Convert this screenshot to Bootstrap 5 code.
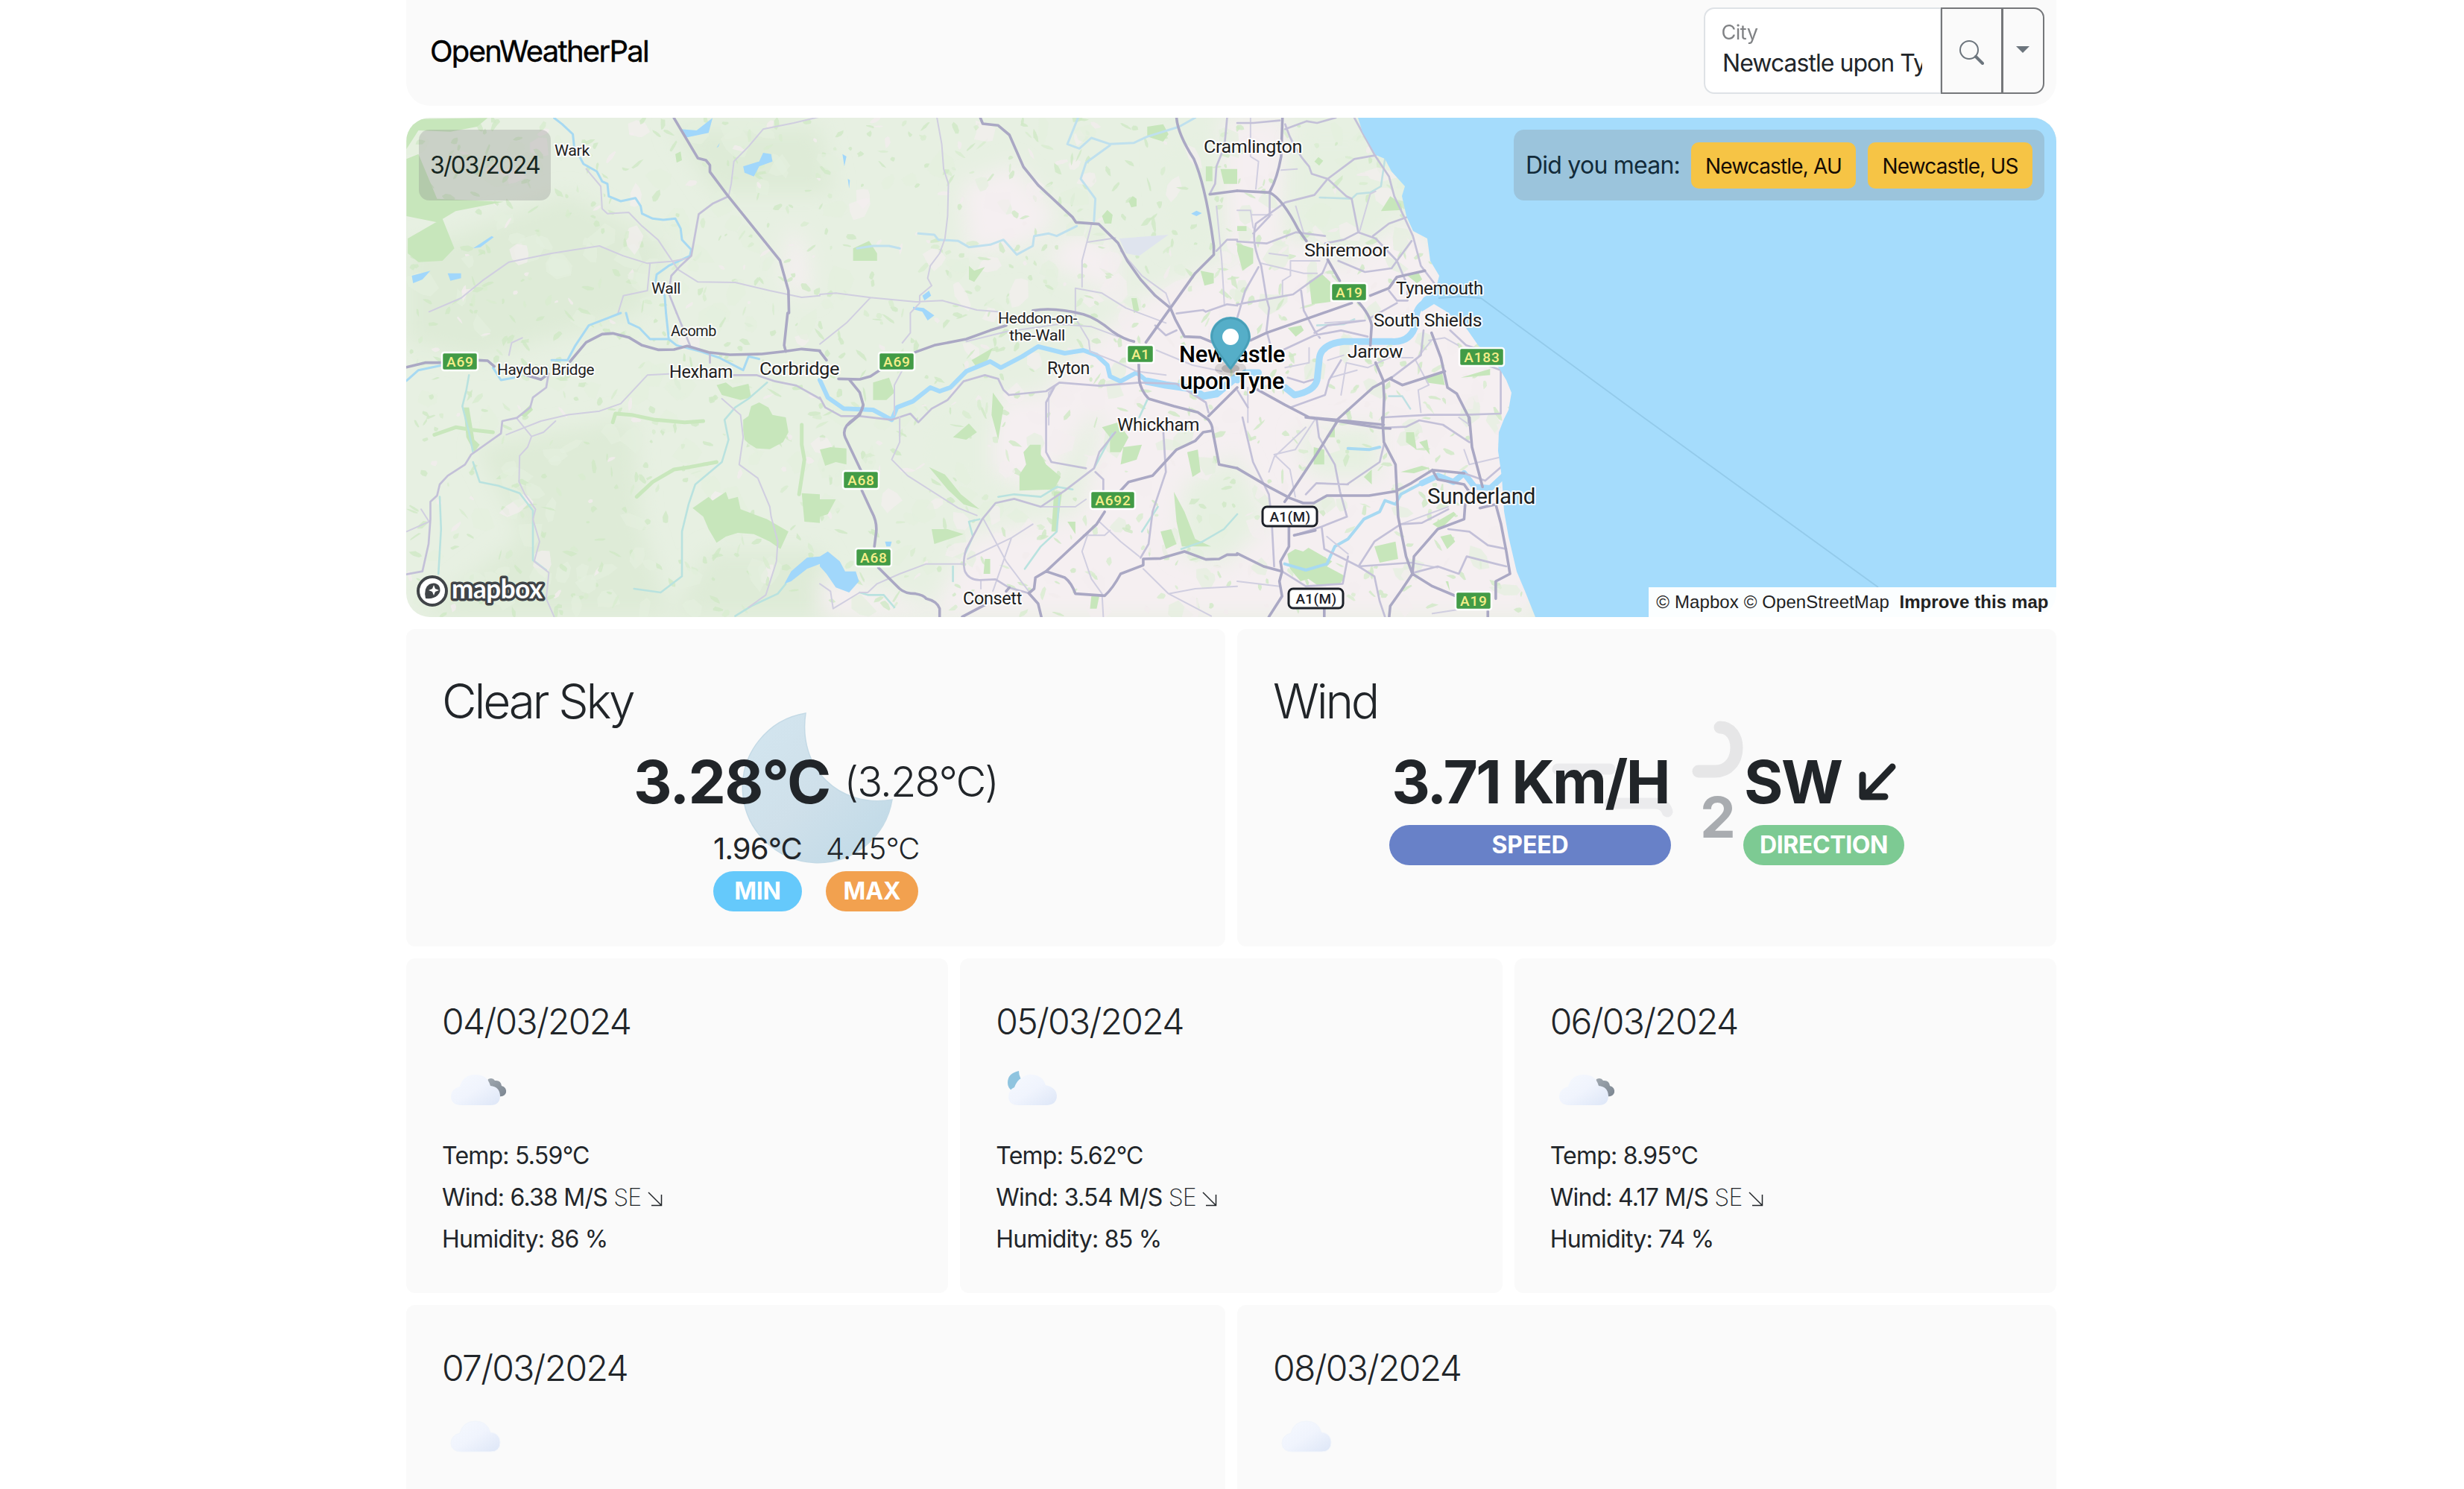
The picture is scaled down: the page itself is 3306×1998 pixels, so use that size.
<!DOCTYPE html>
<html lang="en">
<head>
<meta charset="utf-8">
<title>OpenWeatherPal</title>
<link href="https://cdn.jsdelivr.net/npm/bootstrap@5.3.0/dist/css/bootstrap.min.css" rel="stylesheet">
<style>
html{font-size:32px}
body{font-family:Inter,"Liberation Sans",sans-serif;background:#fff;color:#212529;height:1998px;letter-spacing:-.012em}
.page{width:2214px;margin:0 auto;height:1998px;overflow:hidden;transform:translateX(-1px)}
.panel{background:#fafafa;border-radius:12px}
.topbar{height:142px;padding:10px 16px 0 32px;border-radius:0 0 32px 32px;background:#fafafa}
.brand{font-size:40px;color:#000;line-height:1;padding-top:39px;letter-spacing:-.043em;-webkit-text-stroke:.4px #000}
.searchbox{width:457px;height:116px}
.searchbox .form-floating{width:319px;flex:none}
.searchbox .form-control{border:2px solid #dee2e6;border-radius:14px 0 0 14px;letter-spacing:-.03em;color:#212529;height:116px;padding-left:23px}
.searchbox .form-floating>label{border:0;color:#3d4044;left:-1px;letter-spacing:-.02em}
.searchbox .btn{border:2px solid #75777a;color:#6c757d;background:#fafafa;padding:0;display:flex;align-items:center;justify-content:center}
.btn-find{width:84px}
.btn-find svg{margin-top:3px}
.btn-more{width:58px;border-radius:0 14px 14px 0!important}
.caret{border:9px solid transparent;border-top:9px solid #6c757d;border-bottom:0;margin-bottom:3px}
.mapbox-wrap{height:670px;margin:16px 0}
.mapbox-wrap svg.mapart{display:block;border-radius:32px;width:2214px;height:670px}
.chip{background:rgba(128,128,128,.28);border-radius:14px;top:16px;height:95px;color:#16261f}
.chip-date{left:17px;width:177px;letter-spacing:-.052em}
.chip-alt{right:16px;width:712px;padding:0 16px;color:#122b3a;background:rgba(128,128,128,.26);letter-spacing:-.024em}
.btn-alt{background:#f6c445;color:#160c04;font-size:28px;line-height:62px;height:62px;width:221px;border-radius:10px;padding:0;letter-spacing:-.03em}
.btn-alt:hover{background:#f6c445}
.attrib{right:0;bottom:0;height:40px;width:547px;background:rgba(255,255,255,.95);font:24px/40px "Liberation Sans",Arial,sans-serif;letter-spacing:.004em;color:#222}
.gap-cards{gap:16px}
.now{height:426px;padding:58px 48px 0}
.now h2{font-size:64px;font-weight:350;line-height:77px;margin:0;letter-spacing:-.05em}
.big{font-size:80px;font-weight:700;line-height:96px;letter-spacing:-.02em}
.feels{font-size:56px;font-weight:350;line-height:96px;letter-spacing:-.033em}
.mm{font-size:40px;line-height:60px;letter-spacing:-.022em}
.pill{height:54px;line-height:54px;border-radius:27px;color:#fff;font-weight:700;font-size:32px;text-align:center;letter-spacing:-.005em}
.deco{left:0;top:0;pointer-events:none}
.day{height:449px;padding:54px 48px 0}
.day h4{font-size:48px;font-weight:350;line-height:62px;margin:0;letter-spacing:-.035em}
.day .wx{display:block;width:100px;height:100px;margin:10px 0 15px}
.day p{font-size:32px;line-height:48px;margin:0 0 8px;letter-spacing:-.024em}
.thin{font-weight:200}
.lbl text{font-family:Roboto,sans-serif;fill:#1e1e1e;stroke:#fff;stroke-width:4;stroke-opacity:.85;paint-order:stroke;stroke-linejoin:round}
.sh rect{fill:#429b46;stroke:#fff;stroke-width:2.5}
.sh text{font:500 19px Roboto,sans-serif;fill:#f4ee8a;letter-spacing:.8px;text-anchor:middle}
.mw rect{fill:#fff;stroke:#1c2028;stroke-width:3}
.mw text{font:500 19px Roboto,sans-serif;fill:#1c2028;letter-spacing:.4px;text-anchor:middle}
.z path{fill:none;vector-effect:non-scaling-stroke;stroke-linejoin:round;stroke-linecap:round}
.z .a{stroke:#aaa8c4;stroke-width:3.6}
.z .b{stroke:#c3c0d8;stroke-width:2.7}
.z .c{stroke:#d0cee0;stroke-width:2}
.z .r{stroke:#a7d9f2;stroke-width:3}
.z .t{stroke:#b9e2df;stroke-width:2.6}
.z .w{fill:#a1d7fb}
.z .g{fill:#c7e6bb}
</style>
</head>
<body>
<svg width="0" height="0" class="position-absolute">
<defs>
<linearGradient id="cl" x1="0" y1="0" x2="1" y2="1"><stop offset="0" stop-color="#f6f9fe"/><stop offset=".5" stop-color="#f0f4fd"/><stop offset="1" stop-color="#dde6f7"/></linearGradient>
<linearGradient id="dk" x1="0" y1="0" x2="1" y2="1"><stop offset="0" stop-color="#a3abb3"/><stop offset="1" stop-color="#7b8590"/></linearGradient>
<linearGradient id="mn" x1="0" y1="0" x2="1" y2="1"><stop offset="0" stop-color="#d3e6f0"/><stop offset=".5" stop-color="#cfe0ea"/><stop offset="1" stop-color="#bed9e7"/></linearGradient>
<symbol id="cloud" viewBox="0 0 100 100"><path d="M26 71q-13 0-14-11q0-11 12-14q4-16 21-16q16 0 20 15q12 1 13 13q0 13-13 13z" fill="url(#cl)" stroke="#f1f5fb"/></symbol>
<symbol id="overcast" viewBox="0 0 100 100"><path d="M62 36q6-3 9 2q8-1 9 7q7 2 6 9q-2 6-9 5l-19-10z" fill="url(#dk)"/><path d="M26 71q-13 0-14-11q0-11 12-14q4-16 21-16q16 0 20 15q12 1 13 13q0 13-13 13z" fill="url(#cl)"/></symbol>
<symbol id="moony" viewBox="0 0 100 100"><path d="M31 25q-15 3-15 16q0 6 5 10l12-5q3-6 0-12q-2-4-2-9z" fill="#8fc4df"/><path d="M31 71q-13 0-14-10q0-11 8-14q4-10 9-12q7-6 15-5q14 1 18 14q14 3 15 14q0 12-13 13z" fill="url(#cl)"/></symbol>
<symbol id="arr" viewBox="0 0 20 20"><path d="M1 1L18.5 18.5M5 18.5H18.5V4" fill="none" stroke="#212529" stroke-width="1.5"/></symbol>
</defs></svg>

<div class="page">
  <nav class="topbar d-flex justify-content-between align-items-start">
    <span class="brand">OpenWeatherPal</span>
    <div class="input-group searchbox flex-nowrap">
      <div class="form-floating">
        <input class="form-control" id="city" placeholder="City" value="Newcastle upon Tyne">
        <label for="city">City</label>
      </div>
      <button class="btn btn-find" type="button" aria-label="Search"><svg width="34" height="34" viewBox="0 0 34 34" fill="none" stroke="#6c757d"><circle cx="14" cy="14" r="12" stroke-width="2"/><path d="M23 23l9 9" stroke-width="4" stroke-linecap="round"/></svg></button>
      <button class="btn btn-more" type="button" aria-label="More"><span class="caret"></span></button>
    </div>
  </nav>

  <div class="mapbox-wrap position-relative">
    <svg class="mapart" viewBox="545 158 2214 670" preserveAspectRatio="none">
      <defs><filter id="soft" x="-20%" y="-20%" width="140%" height="140%"><feGaussianBlur stdDeviation="14"/></filter></defs>
      <rect x="545" y="158" width="2214" height="670" fill="#e7f0e2"/>
      <g filter="url(#soft)" fill="#deebd7">
        <path d="M600 320L760 260 900 330 860 420 640 480 545 460V330z"/><path d="M640 600L850 560 860 700 900 828H560L700 720z"/><path d="M950 740L1100 740 1140 828H900z"/><path d="M900 170L1100 170 1120 260 960 260z"/>
      </g>
      <g filter="url(#soft)" fill="#f5eff1">
        <path d="M1290 250L1360 220 1420 290 1380 330 1300 340z"/><path d="M1530 400L1700 330 1900 300 2060 520 2060 828 1560 828 1250 828 1300 720 1450 690 1480 560 1400 520z"/><path d="M1640 158L1730 158 1720 330 1640 330z"/><path d="M1350 530L1480 530 1400 660 1290 620z"/><path d="M1440 310L1500 330 1500 400 1400 350z"/><path d="M1060 300L1080 330 1090 400 1050 380z"/><path d="M1100 770L1200 800 1290 828H1100z"/>
      </g>
      <g filter="url(#soft)" fill="#e6f0e1">
        <path d="M1590 650L1660 610 1700 700 1640 760 1580 740z"/><path d="M1740 190L1840 190 1870 300 1800 360 1740 300z"/><path d="M1250 560L1330 540 1330 660 1240 640z"/><path d="M1740 580L1850 570 1850 640 1760 640z"/><path d="M1560 200L1620 180 1640 330 1570 330z"/>
      </g>
      <g id="patches"></g>

      <g class="z" transform="translate(540 0) scale(.357143 .333333)">
        <path class="g" d="M15 480L320 475 280 510 180 530 60 525 15 600zM15 640L60 620 130 800 380 812 200 850 130 895 15 870zM20 960L150 880 195 1000 150 1050 60 1055 20 1020zM1025 620l20-10 5 35-20 10z"/>
        <path class="w" d="M1045 520l60 5 60-50-15 60-90 20zM1280 670l60-20 15-35 30 5 5 30-50 20-20 40-35-15zM35 1110l70-20-30 35-35 15zM170 1100l50 0 0 20-40 10zM265 1000l70-50 8 5-50 40zM1180 595l12-20-5 15z"/>
        <path class="r" d="M570 475L600 500 640 540 645 590 680 660 730 690 750 730 770 740 775 790 820 810 875 797 895 830 900 860 940 880 980 885 1025 880 1045 920 1050 965 1085 1005 1080 1030 1000 1070 955 1105 950 1140 985 1190 990 1260"/>
        <path class="c" d="M690 680L745 750 750 840 770 860 850 855 900 910 960 965 1010 1045 1035 1085 1110 1135 1250 1137 1380 1170 1500 1197 1568 1190M100 1255L220 1200 300 1130 400 1055 560 1020 740 990 830 1030 920 1060 1010 1052 1070 1040M1568 470L1470 495 1355 520 1300 590 1245 650 1235 740 1225 790M930 1060l-10 110-90 20-20 70"/>
        <path class="b" d="M1220 793L1165 820 1113 862 1090 1000 1085 1030 1040 1075 1010 1110 1000 1180 1030 1260"/>
        <path class="a" d="M1020 475L1110 637 1140 645 1155 665 1155 692 1220 785 1418 1048 1450 1170 1452 1260"/>
      </g>
      <g class="z" transform="translate(540 420) scale(.357143 .333333)">
        <path class="g" d="M1090 785L1110 770 1150 740 1165 755 1215 720 1225 750 1260 740 1270 790 1370 830 1450 880 1420 950 1380 920 1320 890 1260 885 1215 900 1180 925 1150 870 1130 820zM1280 430L1300 415 1310 375 1340 360 1375 380 1390 410 1440 420 1450 480 1430 520 1380 548 1330 545 1300 525 1285 510 1280 470zM1180 290L1215 280 1240 300 1300 285 1310 340 1270 350 1200 330zM1500 725L1568 730V845L1510 840zM230 380l20 0 20 130 20 20-20 30-30-60zM440 410l40-40 10 20-30 30z"/>
        <path class="t" style="stroke:#c9e7bd;stroke-width:5" d="M790 440L800 405 860 410 950 430 1060 440 1130 435M880 740l60-60 80-50 60-10 100-20M120 490l80-30 60 10 80 10M1500 450v80l10 60-20 140"/>
        <path class="r" d="M15 273L60 230 150 210M340 220L370 270 420 260M560 190L620 190 650 130 700 50 760 25 820 0M840 0L850 40 890 60 930 105 1000 105 1030 130 1120 155 1190 180 1280 230 1300 175 1340 185M990 0l10 100"/>
        <path class="t" d="M250 250L240 310 225 375 250 480 265 560M1370 280L1300 345 1250 380 1210 430 1225 510 1200 600 1100 690 1075 770 1050 880 1050 1060 970 1125 870 1110M140 740L145 870 135 1050M265 600l25 80 70 15 80 30 50 70 0 90 0 110 50 40M1250 1220l60-40 100-50 30-40"/>
        <path class="w" d="M1435 1090L1460 1040 1520 985 1568 980V1010L1520 1030 1460 1080z"/>
        <path class="c" d="M430 425L485 497 470 540 440 575 438 680 460 730 500 790 490 830 515 920 495 1000 550 1045 540 1150 570 1223M390 490L520 435 620 410 740 395 820 365 920 250 1000 245M485 497L530 480 575 435M1200 345L1270 410 1280 500 1265 610 1335 665 1380 780 1385 820 1410 920 1405 1000 1365 1135 1300 1185M70 790l30 50-85 40M400 170l10-50 40-20"/>
        <path class="b" d="M1240 250L1330 250 1400 275 1480 292 1568 345M548 250L540 300 490 340 480 380 430 422 375 435 370 485 258 570 235 610 170 655 140 690 130 735 105 760 105 830 98 930 75 1040 15 1052M1030 0L1080 130M1155 160l0 40"/>
        <path class="a" d="M15 218L85 200 150 200M283 190L320 192 345 215M460 248L520 268 548 245M630 195L690 118 750 85 790 82 850 98 900 130 960 148 1020 147 1070 133 1150 158 1230 168 1350 165 1430 155 1500 145 1568 152M1447 0L1434 130 1440 155"/>
      </g>
      <g class="z" transform="translate(1100 150) scale(.357143 .333333)">
        <path class="g" d="M125 550l60-30 30 50 0 30-90 0zM1060 420l20-25 20 20-5 35-25 0zM1230 60l60-10 20 40-20 30-60-20zM1160 360l15-20 15 10 0 30-20 5zM200 1090l60-20 20 60-30 30-50 0zM1450 220h25v60h-25zM1505 230h63v60l-50 0zM1430 640l50 10 0 40-35 10zM560 620l20 20 40-15-40 60-20-10zM570 1000l80-50-20 50-40 30zM1170 750l20 0 10 50-20 10z"/>
        <path style="fill:#dfe4ee" d="M1125 510L1310 495 1200 580 1150 570z"/>
        <path class="w" d="M385 740l25-20 8 20-25 20zM350 785l40 5 40 30-25 20-20-35-35-10zM85 170l15 10-8 40zM105 270l8 5-3 35zM1395 410l20-12 20 10-20 12z"/>
        <path class="r" style="stroke:#bfe0ee" d="M370 490L430 495 445 515 520 520 560 545 640 535 690 515 740 575 800 540 805 500 860 490 890 500 965 460M970 24L930 130 975 148 1020 105 1090 130 1180 125 1230 100 1350 60 1410 24M1090 135L1000 205 980 270 1035 350 1030 440M140 550l60-10 60 0 40 10"/>
        <path class="r" style="stroke-width:6;stroke:#a5dafa" d="M0 1080L30 1150 90 1195 200 1200 270 1240 290 1190 350 1165 415 1110 450 1125 490 1110 550 1045 640 1005 680 1030 760 985 820 945 920 972 990 960 1040 980 1080 1020 1090 1065 1130 1085 1190 1050 1230 1085"/>
        <path class="r" style="stroke-width:10;stroke:#a5dafa" d="M1230 1085L1300 1100 1400 1115 1440 1145 1490 1135 1568 1065"/>
        <path class="c" d="M440 24L458 130 465 230 483 290 480 420 470 510 450 570 415 620 405 670 420 700 375 740 375 770 340 810 340 890 310 930M0 735L60 730 190 748 360 765 460 760 590 798 670 805M190 748L100 850 0 935M1020 455L985 600 985 705M1005 525L1110 508M960 820L960 710 1060 730 1150 790 1300 850M960 830L1010 920 1015 965 1110 1005 1190 1045 1300 1060M1265 960L1400 1020 1510 1045M1130 560L1210 660 1300 730 1320 790M1490 380L1510 600 1520 780M280 1220l0-120 30-60M860 1260V1130l40-40M550 925l150-40 200-30 120 10 100 40"/>
        <path class="b" d="M1530 24L1520 140 1490 220 1485 290 1465 330M710 1140L690 1120 670 1075 620 1060 540 1085 480 1160 420 1195 370 1250 340 1215 270 1240 150 1225 80 1225 20 1190 0 1150M710 1140L850 1125 900 1090 1050 1103 1200 1090 1340 1095 1450 1170 1460 1210M1340 812L1440 798 1450 805 1530 775 1568 780M1490 560l40-45 38 0M1260 860l40 40 40-20"/>
        <path class="a" d="M603 24L612 48 670 55 712 93 765 222 820 295 950 425 962 445 1048 452 1120 528 1155 600 1205 675 1260 740 1317 790M1340 24Q1345 90 1405 190 1450 300 1480 540L1480 575 1410 650 1317 790 1225 928M1317 790L1335 835 1370 905 1430 908 1480 930M800 800Q880 785 990 815 1040 830 1100 885 1140 915 1180 925M358 968L430 940 550 915 640 880 700 860M225 1040L190 1065 150 1077 70 1075M110 1077L150 1130 163 1180 150 1220 105 1260M1198 1010L1200 1080Q1205 1120 1235 1155L1330 1185 1420 1210 1460 1240M1568 1110L1460 1225M0 965L25 1000M1465 332L1568 318"/>
      </g>
      <g class="z" transform="translate(1100 500) scale(.357143 .333333)">
        <path class="g" d="M750 410L775 370 765 320 790 290 830 290 830 330 850 370 905 420 880 470 750 475zM0 310L40 300 100 305V370L60 360 20 375zM500 260L560 205 590 240 550 270zM1140 300L1210 290 1190 350 1130 370zM420 630l60 0 60 20-110 40zM1280 640l40-10 20 60-40 20zM1380 320l40-10 10 90-30 20zM1060 220l60-20 40 60-30 60-40 0 0-60zM880 480l30 0-20 160-20 0zM410 380l60 30 60 80 70 60-60-20-60-60zM1330 480l40 80 40 110 60 30-110 0-20-100zM1020 900h30l-10 50-25 0zM0 510l60 0-30 60-30 10zM620 750l20 0 0 60-25 0zM650 80l40 60-20 130-25-100zM930 600l30 0 0 50z"/>
        <path class="w" d="M0 740L30 720 75 760 95 800 135 800 147 840 110 885 60 865 25 810 0 780zM245 680h25l-5 20h-15z"/>
        <path class="t" d="M600 590L560 600 575 660 545 730M1030 385l70-140M1270 540l-60 100M1568 570l-50 60-80 50-80 30M670 500l60-10 100 10 60-40 60 10M500 780l0 60M150 885l30 10 60 0 40 50M900 500l-10 140-60 60-60 90M1200 180l30-70"/>
        <path class="c" d="M300 180L300 280 270 350 330 415 520 545 590 575M615 590L700 760 790 888M555 750L720 665 800 610M650 880L720 665M215 850L300 810 400 770 540 770M1050 600L1130 680 1200 740M1010 640L985 720 1020 830 1060 890 1065 983M1215 790L1310 890 1470 980M830 540L960 540 1000 510M215 850L180 885 150 885 50 950 40 880 0 850M605 835V870M1310 890l100-20 158-10M990 655l80 0 20-20"/>
        <path class="b" d="M610 590L550 710Q535 760 545 800 560 835 600 835L660 832 710 865 785 888M610 590L660 525 730 508 830 540 920 475 1030 385 1050 320 1110 240M1290 230L1300 400 1250 560 1235 690 1205 745M880 60L850 120 850 320 870 360 1000 385M1035 400l30 30 0 50"/>
        <path class="a" d="M163 130Q160 160 130 185 80 220 95 260L155 395M158 475L195 560Q215 600 212 640L205 700M220 785Q290 860 300 870 320 890 360 890 390 895 400 910 440 920 450 950V983M1070 560L1040 610 930 720 850 800 810 825 805 870 785 888 820 930 832 983M850 800L920 825Q945 845 960 890L1070 898Q1100 870 1130 810L1215 775 1215 750 1280 748 1370 720 1450 752 1500 750 1530 733 1568 733M1130 475L1160 440 1250 415 1340 310 1410 275 1440 240 1470 235M1460 190Q1475 210 1475 230L1500 370 1568 385M535 983L620 935M700 880L712 865"/>
      </g>
      <g class="z" transform="translate(1660 150) scale(.357143 .333333)">
        <path class="g" d="M540 400L575 340 615 370 620 395zM270 680l50-25 30 30 0 80-70 10zM0 530l60 20 0 60-40 30-20-80zM640 660l40-15 15 30-20 15zM190 870l50-10 10 20-30 25zM290 200l15-18 18 15-15 20zM710 1070l60-20 10 50-70-10zM0 460h35v20H0zM840 1070l110-35 0 25z"/>
        <path class="t" style="stroke:#bfe0e3" d="M555 190L540 300 500 325 450 330 430 350 310 345M570 1145l50 0 30 50M300 860l100-5 40-20"/>
        <path class="c" d="M50 24V180L80 200 70 310M220 380l30 110M460 480l40-150 20-10M165 235l60-5M0 397h50l10 70M55 415h75M90 610L250 650 300 650M170 740v-60l30-20v-60l110 0M120 570l70 10M330 850l140-10M390 1140l20-130 80 20 80-40 90 0M690 1210l-10-90 40-20-50-100 60-80M720 920l60-10 50 30M340 1000l60-20M180 1030l90-20 0-60M40 1110v140M450 1040l-100 30"/>
        <path class="b" d="M180 50Q210 150 270 220L280 250 340 270 410 340 430 350 455 485M0 45L60 45 160 35M180 70L260 38 300 45 370 24M520 175L440 190 340 270 290 335 180 365 70 450Q50 520 90 620L110 750 120 790 110 880 130 960M440 24L520 180 570 260 590 340 630 430 660 500 690 620 740 690M455 485L400 515 330 530M455 485L520 510 600 600 580 630 480 645 380 600M600 600L655 520M510 500L570 450 635 425M0 522L110 530 220 485 330 500M0 775L110 755 210 735 320 650 340 600M240 720L250 800 290 880 310 910M150 970L290 900 390 880 490 905M700 880L690 980 580 1070M600 600L640 700 640 760 600 760 570 720M80 625L30 720 0 830M390 1000L345 1080 330 1140 200 1190M550 1230l170-10 130 0 140-5V1040L940 1020M122 325V420L60 490M800 880l60 60 60 20M480 840l-140 20-50 30M500 830l100-60M190 1070l60 20 60-20M0 1120l40 70"/>
        <path class="r" style="stroke-width:9;stroke:#a5dafa" d="M710 765Q665 790 672 850 655 930 580 925L400 925Q310 935 308 1000L300 1080Q290 1125 215 1140L180 1110M80 1050L30 1050 0 1080"/>
        <path class="a" d="M170 24L165 180Q150 270 122 322M0 318L122 325Q170 350 230 475L260 520M340 595L385 680M455 765Q500 820 505 860L500 940M520 1010L548 1080 552 1150 548 1260M50 920L110 890 430 770M500 740L570 710 600 665 705 640M370 1245L510 1110 580 1070M575 1075L620 1100 780 1045M730 890L765 990 790 1110 825 1135 870 1230 872 1260M70 1115L180 1180 270 1230 370 1240 550 1260"/>
      </g>
      <g class="z" transform="translate(1660 560) scale(.70791 .333333)">
        <path class="g" d="M95 550l15-20 15 10 10-15 45 55-10 20 35 40-10 30-40 10-20-30-15 10-20-50zM260 520l40-20 5 70-35 15zM145 120l20 10 0 60-20 0zM385 480l20-10 8 30-15 30zM370 430l40-50 5 10-30 60zM310 220l40-25 15 10-30 20zM320 60l15 0 5 70-20-30zM345 100l15-10 5 60zM395 660l5 0 3 40zM185 20l0 60-15 0zM240 240l15-30 0 60z"/>
        <path class="r" style="stroke-width:4" d="M350 265L310 310 300 350 280 335 270 380 240 410 210 490 185 520 170 590 130 615 90 590M210 125L250 130 270 120"/>
        <path class="r" style="stroke-width:8;stroke:#a5dafa" d="M505 235L480 285 450 280 430 225 410 260 380 235 350 265"/>
        <path class="c" d="M130 40l-60 120-10 60M150 0l-40 130-40 20 30 60 10 110M310 430l90-70M440 30l-20-30M500 160l-60 30-10-60M330 585l50 20M210 550l-40-70M370 790l60-20M0 660L80 680"/>
        <path class="b" d="M275 42L320 38 345 12 390 30 440 100M10 0L30 180 60 310 65 400 70 600M150 0L155 80 185 190 195 300 208 400 160 440 108 475M160 440L165 530 230 600 260 640 270 740 280 803M85 620L130 680 200 670 210 560M230 600L260 500 310 430 350 425 400 370M230 600L330 585M208 270L270 180 278 110M130 310L150 265 210 270M335 625L380 600 420 630 435 560 490 590 510 600M400 450L440 460 475 515 510 530M430 225L470 255 500 200"/>
        <path class="a" d="M130 0L190 15 270 42 290 45M190 15L150 150 100 310 90 340M0 205L60 280 100 325 125 345 145 345 170 315 250 315 300 298 330 265 370 212 430 225M275 0L278 100 300 190 305 400 320 560 332 630 370 680 415 720M440 0L445 120 465 280M332 630L310 700 290 760 288 803M332 630L335 560 380 450 430 410 432 350M370 212L380 250 430 270 440 300M0 548L50 600 85 620M98 440V520L82 580 85 620 80 660 85 720 60 803M108 475l40-20M460 365L490 350 500 430 510 540 517 630 490 660 490 730M165 770V803M475 780V803"/>
      </g>
      <path d="M1822 158L1828 177 1846 208 1858 213 1867 230 1885 250 1881 263 1887 290 1896 310 1915 320 1919 350 1931 370 1926 390 1910 399 1903 410 1908 418 1924 408 1939 417 1967 440 1983 463 2012 495 2021 510 2028 527 2024 550 2018 562 2011 580 2010 605 2015 640 2018 686 2024 720 2035 767 2046 793 2060 828H2759V158z" fill="#a5dcfc"/>
      <path d="M1930 400L1960 398 1987 400 2205 560 2520 788" fill="none" stroke="#93caea" stroke-width="1.8"/>

      <g transform="translate(1624 425) scale(2)">
        <ellipse cx="13.5" cy="34.8" rx="10.5" ry="5.25" fill="#000" opacity=".12"/><ellipse cx="13.5" cy="34.8" rx="6" ry="3" fill="#000" opacity=".16"/>
      </g>
      <g class="lbl" id="labels"></g>
      <g class="sh" id="shields"></g>
      <g class="mw" id="motorways"></g>
      <g transform="translate(1624 425) scale(2)">
        <path d="M27 13.5C27 19.07 20.25 27 14.75 34.5 14.02 35.5 12.98 35.5 12.25 34.5 6.75 27 0 19.22 0 13.5 0 6.04 6.04 0 13.5 0 20.96 0 27 6.04 27 13.5z" fill="#55aec8"/>
        <path d="M26 13.5C26 18.8 19.5 26.2 13.5 34.8 7.5 26.2 1 18.8 1 13.5 1 6.6 6.6 1 13.5 1S26 6.6 26 13.5z" fill="none" stroke="#3b8da6" stroke-width="1.2" opacity=".5"/>
        <circle cx="13.5" cy="13.5" r="5.5" fill="#fff"/>
      </g>
      <circle cx="580" cy="793" r="19" fill="#fff" stroke="#404448" stroke-width="4"/>
      <path d="M571 803q-3-14 5-19q8-4 13 2q4 7-2 13q-5 5-16 4z" fill="#404448"/><path d="M582 785l2 5 5 2-5 2-2 5-2-5-5-2 5-2z" fill="#fff"/>
      <text x="606" y="803" textLength="122" lengthAdjust="spacingAndGlyphs" font-family="Lato,sans-serif" font-weight="700" font-size="36" fill="#fff" stroke="#404448" stroke-width="7" paint-order="stroke" stroke-linejoin="round">mapbox</text>
    </svg>
    <div class="chip chip-date position-absolute d-flex align-items-center justify-content-center">3/03/2024</div>
    <div class="chip chip-alt position-absolute d-flex align-items-center justify-content-between">
      <span>Did you mean:</span>
      <div class="d-flex gap-cards"><button class="btn btn-alt">Newcastle, AU</button><button class="btn btn-alt">Newcastle, US</button></div>
    </div>
    <div class="attrib position-absolute text-center text-nowrap">© Mapbox © OpenStreetMap&nbsp; <b>Improve this map</b></div>
  </div>

  <div class="d-flex gap-cards">
    <section class="panel now flex-fill w-50 position-relative">
      <svg class="deco position-absolute" width="1099" height="426" viewBox="545 844 1099 426"><path d="M1081 957C1070 1030 1125 1085 1197 1073A101 101 0 1 1 1081 957z" fill="url(#mn)" stroke="#c4dae6" stroke-width="1.5"/></svg>
      <div class="position-relative">
        <h2>Clear Sky</h2>
        <div class="d-flex justify-content-center align-items-center" style="margin-top:22px;gap:19px">
          <span class="big">3.28°C</span><span class="feels">(3.28°C)</span>
        </div>
        <div class="d-flex justify-content-center" style="gap:32px;margin-top:12px">
          <div style="width:119px" class="text-center"><div class="mm">1.96°C</div><div class="pill" style="background:#65c9fb">MIN</div></div>
          <div style="width:124px" class="text-center"><div class="mm" style="font-weight:350">4.45°C</div><div class="pill" style="background:#f2a14f">MAX</div></div>
        </div>
      </div>
    </section>
    <section class="panel now flex-fill w-50 position-relative">
      <svg class="deco position-absolute" width="1099" height="426" viewBox="1660 844 1099 426" fill="none" stroke-linecap="round">
        <path d="M2308 976C2322 976 2330 989 2330 1003C2330 1021 2319 1035 2301 1035H2279" stroke="#e6e6e7" stroke-width="17"/>
        <path d="M2090 1032H2160M2160 1078H2222Q2234 1079 2237 1089" stroke="#ebebed" stroke-width="15"/>
        <text x="2281" y="1124" font-family="Inter" font-weight="700" font-size="76" fill="#a9acb0">2</text>
      </svg>
      <div class="position-relative">
        <h2>Wind</h2>
        <div class="d-flex justify-content-center" style="gap:97px;margin-top:22px">
          <div style="width:378px"><div class="big d-flex justify-content-center text-nowrap" style="letter-spacing:-.034em">3.71 Km/H</div><div class="pill" style="background:#6881c8;margin-top:10px">SPEED</div></div>
          <div style="width:216px"><div class="big ps-1 text-nowrap d-flex align-items-center" style="gap:22px"><span style="margin-left:-7px;letter-spacing:-.03em">SW</span><svg width="52" height="52" viewBox="0 0 52 52" fill="none" stroke="#212529" stroke-width="9" stroke-linecap="round" stroke-linejoin="round"><path d="M46 6L8 46M6 17V46H36"/></svg></div><div class="pill" style="background:#7dca93;margin-top:10px;letter-spacing:-.012em">DIRECTION</div></div>
        </div>
      </div>
    </section>
  </div>

  <div class="d-flex gap-cards" id="row1" style="margin-top:16px"></div>
  <div class="d-flex gap-cards" id="row2" style="margin-top:16px"></div>
</div>

<script>
const card=(d,ic,t,w,h)=>`<section class="panel day" style="flex:1 1 0"><h4>${d}</h4><svg class="wx"><use href="#${ic}"/></svg><p>Temp: ${t}°C</p><p>Wind: ${w} M/S <span class="thin">SE</span> <svg width="20" height="20"><use href="#arr"/></svg></p><p>Humidity: ${h} %</p></section>`;
row1.innerHTML=card('04/03/2024','overcast','5.59','6.38',86)+card('05/03/2024','moony','5.62','3.54',85)+card('06/03/2024','overcast','8.95','4.17',74);
const later=(d)=>`<section class="panel day" style="flex:1 1 0;height:248px;padding-bottom:0;border-radius:12px 12px 0 0;overflow:hidden"><h4>${d}</h4><svg class="wx"><use href="#cloud"/></svg></section>`;
row2.innerHTML=later('07/03/2024')+later('08/03/2024');

// Place names: text, left, baseline, width, size, weight
labels.innerHTML=[['Wark',744,209,47,21],['Wall',874,394,39,21],['Acomb',900,451,61,20],['Haydon Bridge',667,503,130,21],['Hexham',898,507,85,24],['Corbridge',1019,503,107,24],['Heddon-on-',1339,434,106,21],['the-Wall',1354,457,75,21],['Ryton',1405,502,57,24],['Whickham',1499,578,110,24],['Consett',1292,811,79,24],['Cramlington',1615,205,132,24],['Shiremoor',1750,344,113,24],['Tynemouth',1873,395,117,24],['South Shields',1843,438,145,24],['Jarrow',1808,480,74,24],['Sunderland',1915,676,145,29],['Newcastle',1582,486,142,31,500],['upon Tyne',1583,522,140,31,500]]
.map(l=>`<text x="${l[1]}" y="${l[2]}" textLength="${l[3]}" lengthAdjust="spacingAndGlyphs" font-size="${l[4]}" font-weight="${l[5]||400}" ${l[5]?'style="fill:#000"':''}>${l[0]}</text>`).join('');
// Road shields: text, left, top, width
shields.innerHTML=[['A69',593,473,48],['A69',1179,473,48],['A1',1512,463,36],['A19',1786,380,48],['A183',1958,467,60],['A68',1131,632,48],['A68',1148,736,48],['A692',1463,659,60],['A19',1953,794,48]]
.map(s=>`<rect x="${s[1]}" y="${s[2]}" width="${s[3]}" height="24" rx="3"/><text x="${s[1]+s[3]/2+.4}" y="${s[2]+19}">${s[0]}</text>`).join('');
motorways.innerHTML=[[1694,680],[1729,790]].map(s=>`<rect x="${s[0]}" y="${s[1]}" width="73" height="26" rx="6"/><text x="${s[0]+37}" y="${s[1]+20}">A1(M)</text>`).join('');

// Field and woodland patches, from a fixed seed
let seed=7;const rnd=()=>(seed=(seed*16807)%2147483647)/2147483647;
let p='';
for(let i=0;i<1500;i++){
  const x=550+rnd()*1500,y=160+rnd()*666,big=rnd()<.2,a=rnd()*6.28;
  const L=big?8+rnd()*18:3+rnd()*9,W=big?8+rnd()*16:1.5+rnd()*3.5;
  let pts='';for(let k=0;k<7;k++){const q=k/7*6.28,u=Math.cos(q)*L*(.5+rnd()*.6),v=Math.sin(q)*W*(.5+rnd()*.6);
    pts+=(x+u*Math.cos(a)-v*Math.sin(a)).toFixed(1)+','+(y+u*Math.sin(a)+v*Math.cos(a)).toFixed(1)+' ';}
  const fill=big?(rnd()<(x>1150?.5:.15)?'#f4eef0':'#e4efde'):(rnd()<.65?'#d0e9c6':rnd()<.5?'#d8ecd0':'#f3ecee');
  p+=`<polygon points="${pts}" fill="${fill}" opacity="${big?.7:.8}"/>`;
}
patches.innerHTML=p;
</script>
<script src="https://cdn.jsdelivr.net/npm/bootstrap@5.3.0/dist/js/bootstrap.bundle.min.js"></script>
</body>
</html>
